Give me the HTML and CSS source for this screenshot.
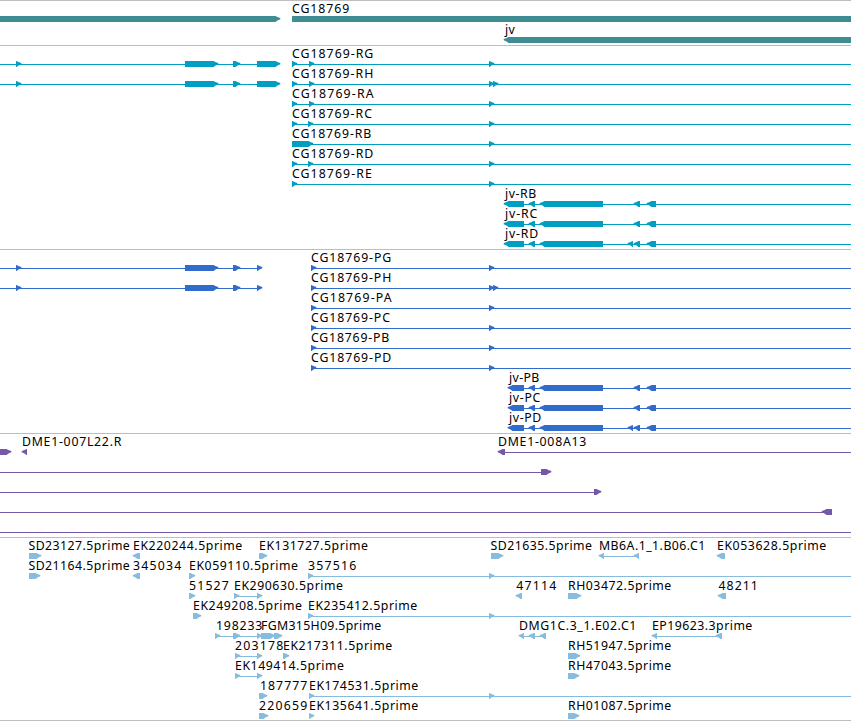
FILE: index.html
```
<!DOCTYPE html>
<html lang="en">
<head>
<meta charset="utf-8">
<title>Genome tracks</title>
<link rel="stylesheet" href="styles.css">
</head>
<body>
<main class="browser" id="browser"></main>
<script src="tracks.js"></script>
</body>
</html>
```
FILE: styles.css
```
html, body {
  margin: 0;
  background: #fff;
}

.browser {
  display: flex;
  flex-direction: column;
  width: 851px;
  height: 721px;
  overflow: hidden;
  border-bottom: 1px solid #bdbdbd;
  box-sizing: border-box;
}

.track {
  border-top: 1px solid #bdbdbd;
  padding-bottom: 3px;
}

.track:last-child {
  padding-bottom: 2px;
}

.row {
  display: block;
  width: 851px;
  height: 20px;
  overflow: visible;
}

.gene .row:first-child {
  height: 21px;
}

.row path {
  fill: currentColor;
}

.row rect {
  fill: currentColor;
  shape-rendering: crispEdges;
}

.row text {
  fill: #000;
  font-family: "Noto Sans", "DejaVu Sans", sans-serif;
  font-size: 12.3px;
}

.gene { color: #3f8d93; }
.transcript { color: #009fc1; }
.protein { color: #316ccc; }
.bac { color: #7558a7; }
.est { color: #87bcde; }
```
FILE: tracks.js
```
// Row tokens: "- a b" intron line, "> a b" forward exon, "< a b" reverse exon.
// Labels: [left, right, text].
const LEFT = "- -5 257, > 16 21, > 185 218, > 233 240, ";
const JV = "- 520 860, < 529 535, < 540 603, < 634 640, < 647 656";
const tracks = [
  ["gene", [
    ["> -10 280, > 292 870", [292, 349, "CG18769"]],
    ["< 504 870", [505, 514.5, "jv"]]
  ]],
  ["transcript", [
    [LEFT + "> 257 280, - 292 860, > 292 297, > 309 314, > 489 494", [292, 373, "CG18769-RG"]],
    [LEFT + "> 257 280, - 292 860, > 292 297, > 309 314, > 489 494, > 493 498", [292, 373, "CG18769-RH"]],
    ["- 292 860, > 292 297, > 309 314, > 489 494", [292, 373.3, "CG18769-RA"]],
    ["- 292 860, > 292 297, > 308 313, > 489 494", [292, 371.7, "CG18769-RC"]],
    ["- 292 860, > 292 313, > 489 494", [292, 371, "CG18769-RB"]],
    ["- 292 860, > 292 297, > 308 313, > 489 494", [292, 373, "CG18769-RD"]],
    ["- 292 860, > 292 297, > 489 494", [292, 371.5, "CG18769-RE"]],
    [JV + ", < 504 524", [505, 536, "jv-RB"]],
    [JV + ", < 504 524", [505, 537, "jv-RC"]],
    [JV + ", < 504 524, < 628 633", [505, 538, "jv-RD"]]
  ]],
  ["protein", [
    [LEFT + "> 257 262, - 311 860, > 311 316, > 489 494", [311, 391, "CG18769-PG"]],
    [LEFT + "> 257 262, - 311 860, > 311 316, > 489 494, > 493 498", [311, 391, "CG18769-PH"]],
    ["- 311 860, > 311 316, > 489 494", [311, 391.3, "CG18769-PA"]],
    ["- 311 860, > 311 316, > 489 494", [311, 389.7, "CG18769-PC"]],
    ["- 311 860, > 311 316, > 489 494", [311, 389, "CG18769-PB"]],
    ["- 311 860, > 311 316, > 489 494", [311, 391, "CG18769-PD"]],
    [JV + ", < 508 524", [509, 539, "jv-PB"]],
    [JV + ", < 508 524", [509, 540, "jv-PC"]],
    [JV + ", < 508 524, < 628 633", [509, 541, "jv-PD"]]
  ]],
  ["bac", [
    ["> -5 11, < 22 27, - 502 860, < 498 505", [22, 121, "DME1-007L22.R"], [498, 586, "DME1-008A13"]],
    ["- -5 545, > 541 551"],
    ["- -5 597, > 594 601"],
    ["- -5 826, < 822 832"],
    ["- -5 860"]
  ]],
  ["est", [
    ["> 29 41, < 133 140, > 259 267, > 491 503, - 602 636, < 599 604, < 634 639, < 717 725",
      [28.5, 129.5, "SD23127.5prime"], [133, 242, "EK220244.5prime"], [259, 367.7, "EK131727.5prime"],
      [490.5, 591.7, "SD21635.5prime"], [599, 705, "MB6A.1_1.B06.C1"], [717, 826, "EK053628.5prime"]],
    ["> 29 40, < 133 140, > 189 195, - 308 860, > 308 313, > 489 494",
      [28.5, 129.5, "SD21164.5prime"], [133, 181, "345034"], [189, 297.7, "EK059110.5prime"], [308, 356, "357516"]],
    ["> 189 195, - 234 260, > 234 239, > 257 262, < 516 522, > 568 581, < 718 726",
      [189, 228.5, "51527"], [234, 342.7, "EK290630.5prime"], [516.3, 556, "47114"],
      [568, 671, "RH03472.5prime"], [718.5, 757.5, "48211"]],
    ["> 193 201, - 308 860, > 308 313, > 489 494",
      [193, 301.7, "EK249208.5prime"], [308, 417, "EK235412.5prime"]],
    ["- 215 260, > 215 220, > 233 240, > 257 262, > 261 275, > 274 282, - 522 542, < 519 524, < 529 535, < 540 546, - 655 718, < 652 657, < 716 722",
      [216, 262, "198233"], [261, 381, "FGM315H09.5prime"], [519, 636, "DMG1C.3_1.E02.C1"], [652, 752, "EP19623.3prime"]],
    ["- 235 260, > 235 240, > 257 262, > 283 289, > 568 580",
      [235, 283, "203178"], [283, 392, "EK217311.5prime"], [568, 671, "RH51947.5prime"]],
    ["- 235 260, > 235 240, > 257 262, > 568 579",
      [235, 343.7, "EK149414.5prime"], [568, 671, "RH47043.5prime"]],
    ["> 259 267, - 309 860, > 309 314, > 489 494",
      [260, 307, "187777"], [309, 418, "EK174531.5prime"]],
    ["> 259 268, > 309 314, > 568 579",
      [259, 307, "220659"], [309, 418, "EK135641.5prime"], [568, 671, "RH01087.5prime"]]
  ]]
];

function glyph(token) {
  const [kind, start, end] = token.trim().split(" ");
  const a = Number(start), b = Number(end);
  if (kind === "-") return `<rect x="${a}" y="18" width="${b - a}" height="1"/>`;
  if (kind === ">") return `<path d="M${a} 15H${b - 4.6}L${b - 2} 16.2L${b + 0.3} 17V18.3L${b - 2.5} 19.6L${b - 4.5} 21H${a}Z"/>`;
  return `<path d="M${b} 15H${a + 4.6}L${a + 2} 16.2L${a - 0.3} 17V18.3L${a + 2.5} 19.6L${a + 4.5} 21H${b}Z"/>`;
}

function label([left, right, text]) {
  return `<text x="${left}" y="12" textLength="${right - left + 0.3}">${text}</text>`;
}

document.getElementById("browser").innerHTML = tracks.map(([name, rows]) =>
  `<section class="track ${name}">` + rows.map(([glyphs, ...labels]) =>
    `<svg class="row">${glyphs.split(",").map(glyph).join("")}${labels.map(label).join("")}</svg>`
  ).join("") + "</section>"
).join("");
```
